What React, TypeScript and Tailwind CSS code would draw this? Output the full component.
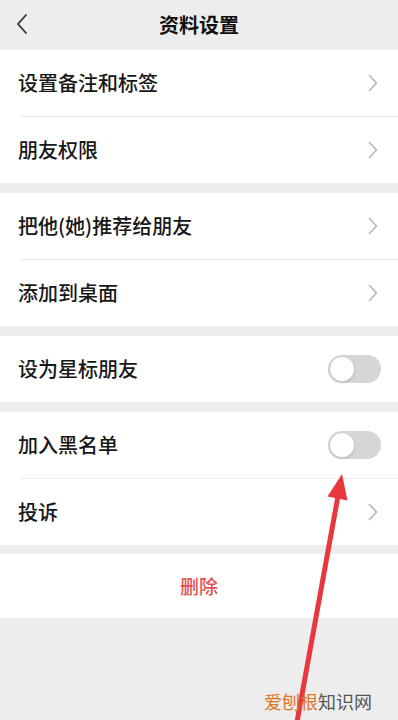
import React from "react";

const font = { fontFamily: '"Noto Sans CJK SC", "Noto Sans", sans-serif' };

function Chevron() {
  return (
    <svg width="10" height="18" viewBox="0 0 10 18" fill="none">
      <path d="M1.5 1.5 L8.5 9 L1.5 16.5" stroke="#b5b5b5" strokeWidth="1.6" strokeLinecap="round" strokeLinejoin="round" />
    </svg>
  );
}

function Toggle() {
  return (
    <div className="w-[53px] h-[28px] rounded-full bg-[#d6d6d6] flex items-center p-[1px]">
      <div className="w-[26px] h-[26px] rounded-full bg-white border border-[#cfcfcf] shadow-[0_1px_2px_rgba(0,0,0,0.12)]" />
    </div>
  );
}

function Row({ label, kind }: { label: string; kind: "chev" | "toggle" }) {
  return (
    <div className={`h-[66px] flex items-center justify-between pl-[18px] ${kind === "chev" ? "pr-5" : "pr-[17px]"}`}>
      <span className="text-[20px] font-medium text-[#171717]">{label}</span>
      {kind === "chev" ? <Chevron /> : <Toggle />}
    </div>
  );
}

function Divider() {
  return <div className="ml-5 h-px bg-[#ececec]" />;
}

export default function App() {
  return (
    <div className="relative w-[398px] h-[720px] bg-[#ededed] overflow-hidden" style={font}>
      <div className="h-[50px] relative flex items-center justify-center">
        <svg className="absolute left-[15px] top-[13px]" width="14" height="22" viewBox="0 0 14 22" fill="none">
          <path d="M11 2 L3 11 L11 20" stroke="#333" strokeWidth="1.8" strokeLinecap="round" strokeLinejoin="round" />
        </svg>
        <span className="text-[20px] font-bold text-[#111]">资料设置</span>
      </div>

      <div className="bg-white">
        <Row label="设置备注和标签" kind="chev" />
        <Divider />
        <Row label="朋友权限" kind="chev" />
      </div>
      <div className="h-[10px]" />
      <div className="bg-white">
        <Row label="把他(她)推荐给朋友" kind="chev" />
        <Divider />
        <Row label="添加到桌面" kind="chev" />
      </div>
      <div className="h-[10px]" />
      <div className="bg-white">
        <Row label="设为星标朋友" kind="toggle" />
      </div>
      <div className="h-[10px]" />
      <div className="bg-white">
        <Row label="加入黑名单" kind="toggle" />
        <Divider />
        <Row label="投诉" kind="chev" />
      </div>
      <div className="h-[9px]" />
      <div className="bg-white h-[64px] flex items-center justify-center">
        <span className="text-[19px] font-medium text-[#e05252]">删除</span>
      </div>

      <svg className="absolute inset-0 pointer-events-none" width="398" height="720" viewBox="0 0 398 720">
        <line x1="297" y1="722" x2="338" y2="496" stroke="#e8383d" strokeWidth="5" />
        <polygon points="342,474 347.5,500.5 327.5,496.5" fill="#e8383d" />
      </svg>

      <div className="absolute left-[264px] top-[692px] text-[18px] leading-none whitespace-nowrap">
        <span className="text-[#e0752a]">爱刨根</span>
        <span className="text-[#555]">知识网</span>
      </div>
    </div>
  );
}
